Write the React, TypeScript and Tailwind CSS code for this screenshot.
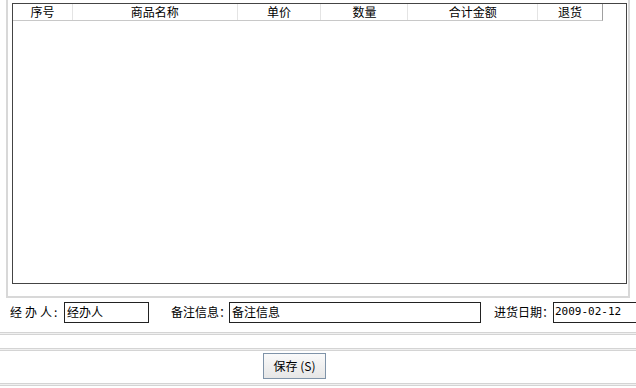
import React from "react";

const cols = [
  { t: "序号", w: 59 },
  { t: "商品名称", w: 165 },
  { t: "单价", w: 84 },
  { t: "数量", w: 87 },
  { t: "合计金额", w: 130 },
  { t: "退货", w: 65 },
];

export default function App() {
  return (
    <div
      className="w-[636px] h-[388px] bg-white overflow-hidden flex flex-col text-[12px] text-black"
      style={{ fontFamily: '"Noto Sans CJK SC", "Liberation Sans", sans-serif' }}
    >
      {/* top panel */}
      <div className="ml-[6px] w-[624px] h-[298px] border-x-2 border-b-2 border-[#d8d8d8] pt-[3px] pl-[4px] shrink-0">
        <div className="w-[615px] h-[281px] border border-[#444] flex flex-col">
          <div className="flex h-[17px] border-b border-[#c8c8c8] w-[590px] border-r border-r-[#a0a0a0]">
            {cols.map((c, i) => (
              <div
                key={c.t}
                className={`h-full flex items-center justify-center leading-none ${i > 0 ? "border-l border-[#e4e4e4]" : ""}`}
                style={{ width: c.w }}
              >
                {c.t}
              </div>
            ))}
          </div>
        </div>
      </div>

      {/* form row */}
      <div className="flex items-center h-[24px] mt-[2px] shrink-0 w-[700px]">
        <span className="ml-[10px] w-[54px] shrink-0 flex gap-[3px] whitespace-pre">
          <span>经</span><span>办</span><span>人</span><span className="-ml-[1px]">:</span>
        </span>
        <div className="w-[85px] h-[21px] border border-[#222] leading-[17px] pl-[2px] shrink-0">经办人</div>
        <span className="ml-[22px] w-[58px] shrink-0 whitespace-pre">备注信息：</span>
        <div className="w-[252px] h-[21px] border border-[#222] leading-[17px] pl-[2px] shrink-0">备注信息</div>
        <span className="ml-[13px] w-[59px] shrink-0 whitespace-pre">进货日期：</span>
        <div className="w-[90px] h-[21px] border border-[#222] leading-[17px] pl-[1px] shrink-0" style={{ fontFamily: '"DejaVu Sans Mono", monospace', fontSize: 11 }}>2009-02-12</div>
      </div>

      <div className="mt-[8px] h-[3px] border-y border-[#d4d4d4] bg-[#f0f0f0] shrink-0" />
      <div className="mt-[13px] h-[3px] border-y border-[#d4d4d4] bg-[#f0f0f0] shrink-0" />

      <div className="flex justify-start pl-[263px] mt-[2px] shrink-0">
        <div className="w-[63px] h-[26px] border border-[#7f93a8] bg-gradient-to-b from-[#fafafa] to-[#e6e6e6] flex items-center justify-center">
          保存 (S)
        </div>
      </div>
      <div className="mt-[4px] h-[3px] border-y border-[#d4d4d4] bg-[#f0f0f0] shrink-0" />
    </div>
  );
}
